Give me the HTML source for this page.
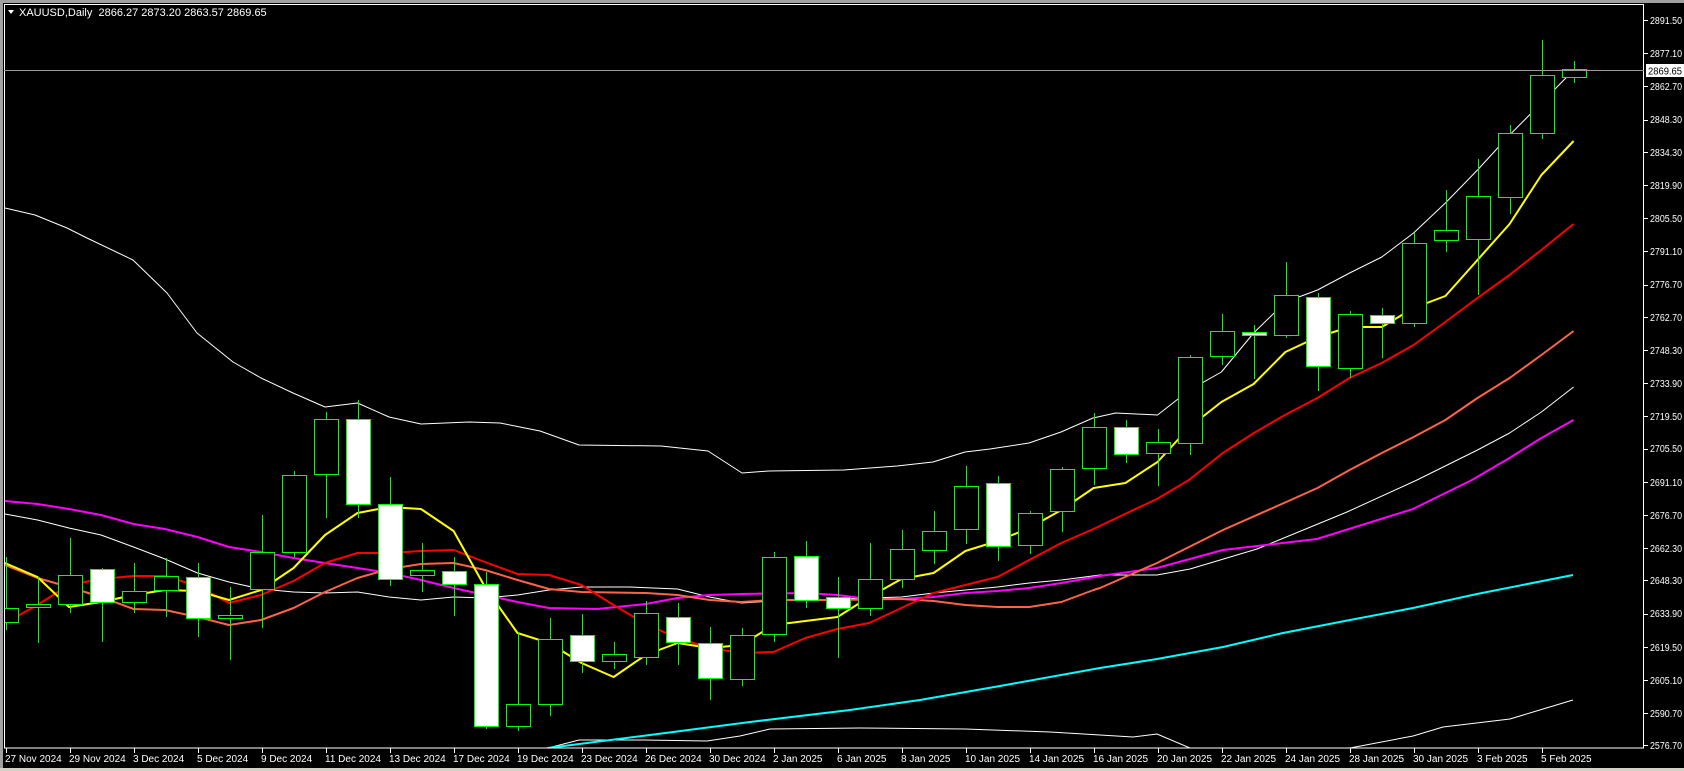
<!DOCTYPE html>
<html><head><meta charset="utf-8"><style>
html,body{margin:0;padding:0;background:#000;width:1684px;height:771px;overflow:hidden}
svg{display:block}
text{font-family:"Liberation Sans",sans-serif;font-size:11px;fill:#fff}
#dates text{font-size:10px}
#axis text{font-size:10px}
</style></head><body>
<svg id="s" width="1684" height="771" xmlns="http://www.w3.org/2000/svg">
<rect x="0" y="0" width="1684" height="771" fill="#000"/>
<rect x="0" y="0" width="1684" height="3" fill="#a0a0a0"/>
<rect x="0" y="0" width="3" height="771" fill="#a0a0a0"/>
<rect x="0" y="768" width="1684" height="3" fill="#d4d0c8"/>
<defs><clipPath id="c"><rect x="4.5" y="4.5" width="1639" height="743"/></clipPath></defs>
<g id="plot" clip-path="url(#c)"></g>
<rect x="4.5" y="4.5" width="1639" height="743.5" fill="none" stroke="#fff" stroke-width="1"/>
<line x1="4" y1="70.5" x2="1644" y2="70.5" stroke="#9a9a9a" stroke-width="1"/>
<path d="M8 10 L14 10 L11 14 Z" fill="#fff"/>
<text x="19" y="16">XAUUSD,Daily&#160;&#160;2866.27 2873.20 2863.57 2869.65</text>
<g id="axis">
<text x="1650" y="24">2891.50</text>
<text x="1650" y="57">2877.10</text>
<text x="1650" y="90">2862.70</text>
<text x="1650" y="123">2848.30</text>
<text x="1650" y="156">2834.30</text>
<text x="1650" y="189">2819.90</text>
<text x="1650" y="222">2805.50</text>
<text x="1650" y="255">2791.10</text>
<text x="1650" y="288">2776.70</text>
<text x="1650" y="321">2762.70</text>
<text x="1650" y="354">2748.30</text>
<text x="1650" y="387">2733.90</text>
<text x="1650" y="420">2719.50</text>
<text x="1650" y="452">2705.50</text>
<text x="1650" y="486">2691.10</text>
<text x="1650" y="519">2676.70</text>
<text x="1650" y="552">2662.30</text>
<text x="1650" y="584">2648.30</text>
<text x="1650" y="617">2633.90</text>
<text x="1650" y="651">2619.50</text>
<text x="1650" y="684">2605.10</text>
<text x="1650" y="717">2590.70</text>
<text x="1650" y="749">2576.70</text>
</g>
<rect x="1646" y="64" width="38" height="13" fill="#fff"/>
<text x="1648" y="74.5" style="fill:#000;font-size:10px" textLength="34" lengthAdjust="spacingAndGlyphs">2869.65</text>
<g id="dates">
<text x="5" y="762">27 Nov 2024</text>
<text x="69" y="762">29 Nov 2024</text>
<text x="133" y="762">3 Dec 2024</text>
<text x="197" y="762">5 Dec 2024</text>
<text x="261" y="762">9 Dec 2024</text>
<text x="325" y="762">11 Dec 2024</text>
<text x="389" y="762">13 Dec 2024</text>
<text x="453" y="762">17 Dec 2024</text>
<text x="517" y="762">19 Dec 2024</text>
<text x="581" y="762">23 Dec 2024</text>
<text x="645" y="762">26 Dec 2024</text>
<text x="709" y="762">30 Dec 2024</text>
<text x="773" y="762">2 Jan 2025</text>
<text x="837" y="762">6 Jan 2025</text>
<text x="901" y="762">8 Jan 2025</text>
<text x="965" y="762">10 Jan 2025</text>
<text x="1029" y="762">14 Jan 2025</text>
<text x="1093" y="762">16 Jan 2025</text>
<text x="1157" y="762">20 Jan 2025</text>
<text x="1221" y="762">22 Jan 2025</text>
<text x="1285" y="762">24 Jan 2025</text>
<text x="1349" y="762">28 Jan 2025</text>
<text x="1413" y="762">30 Jan 2025</text>
<text x="1477" y="762">3 Feb 2025</text>
<text x="1541" y="762">5 Feb 2025</text>
</g>
<g id="ticks"></g>
</svg>
<script>
var NS="http://www.w3.org/2000/svg";
var plot=document.getElementById('plot'),ticks=document.getElementById('ticks');
function el(p,n,a){var e=document.createElementNS(NS,n);for(var k in a)e.setAttribute(k,a[k]);p.appendChild(e);return e;}
function X(i){return 5.6+32*i;}
function line(pts,col,w){el(plot,'polyline',{points:pts.map(function(p){return p[0]+','+p[1]}).join(' '),fill:'none',stroke:col,'stroke-width':w,'stroke-linejoin':'round'});}
Array.prototype.forEach.call(document.querySelectorAll('#axis text'),function(t){t.setAttribute('textLength','32');t.setAttribute('lengthAdjust','spacingAndGlyphs');});
[20,53.2,86.4,119.5,151.8,185,218.1,251.3,284.5,316.7,349.9,383.1,416.3,448.5,481.7,514.9,548.1,580.3,613.5,646.7,679.9,713,745.3].forEach(function(y){el(ticks,'line',{x1:1644,x2:1648,y1:Math.round(y)+.5,y2:Math.round(y)+.5,stroke:'#fff'});});
for(var i=0;i<=48;i+=2){var x=Math.round(X(i))+.5;el(ticks,'line',{x1:x,x2:x,y1:748,y2:753,stroke:'#fff'});}
line([[5,208],[35,215],[67,228],[87,238],[133,260],[167,293],[197,333],[233,362],[261,378],[293,393],[325,407],[357.5,403],[389,417],[421,424],[469,422],[500,423],[525,428],[540,431],[579,445],[661,446],[708,451],[742,473],[768.6,471],[843.6,470],[897,466],[933,462],[965,452],[990,449],[1029,443],[1061,432],[1093,418],[1115.7,413],[1157.5,415],[1189.6,390],[1221.4,372],[1253.6,333],[1285.4,302],[1317.5,290],[1349.6,273],[1381.8,257],[1413.6,233],[1445.4,203],[1477.5,170],[1509.6,135],[1541.4,103],[1573.6,70]],'#fff',1);
line([[5,514],[37.5,520],[69,528],[101,535],[133.6,547],[165,559],[197.5,573],[229,582],[261,589],[293.6,592],[325,593],[357.5,592],[389,597],[421,600],[453.6,597],[485,598],[517.5,595],[549,590],[581.6,587],[629,587],[677.5,589],[709.6,597],[741.4,603],[773.6,601],[837.5,599],[901.4,597],[933.6,593],[965.4,590],[997.5,587],[1029.3,583],[1061.4,580],[1100,575],[1157,575],[1190,569],[1257,549],[1347,512],[1417,480],[1477.5,450],[1509.6,433],[1541.4,412],[1573.6,387]],'#fff',1);
line([[540,752],[548,748],[579,740],[643,740],[707,741],[740,736],[770,729],[860,728],[965,729],[1050,732],[1100,735],[1133,737],[1157,734],[1190,748],[1195,752]],'#fff',1);
line([[1345,752],[1350,748],[1413,736],[1443,727],[1510,719],[1543,709],[1573,700]],'#fff',1);
line([[540,752],[548,748],[650,735],[750,722],[850,710],[920,700],[1000,686],[1100,668],[1157,659],[1223,647],[1283,633],[1350,620],[1413,608],[1477,594],[1573,575]],'#00ffff',2);
line([[5,501],[37.5,504],[69,509],[101,515],[133.6,524],[165,529],[197.5,537],[229,547],[261,552],[293.6,558],[325,563],[357.5,568],[389,573],[421,580],[453.6,588],[485,595],[517.5,602],[549,608],[597,609],[645.7,604],[677.5,598],[709.6,595],[741.4,594],[805.4,593],[837.5,595],[869.3,599],[901.4,599],[933.6,597],[965.4,593],[997.5,591],[1029.3,588],[1061.4,583],[1100,576],[1157,568],[1223,550],[1317,539],[1413,509],[1472,480],[1509.6,458],[1541.4,438],[1573.6,420]],'#ff00ff',2);
line([[5,565],[37.5,578],[69,587],[101,597],[133.6,609],[165,610],[197.5,617],[229,625],[261,620],[293.6,608],[325,592],[357.5,578],[389,569],[421,564],[453.6,563],[485,570],[517.5,580],[549,589],[581.6,592],[645.7,593],[677.5,595],[709.6,600],[741.4,602],[773.6,600],[837.5,600],[901.4,599],[933.6,601],[965.4,605],[997.5,607],[1029.3,607],[1061.4,602],[1093.6,590],[1100,588],[1157,563],[1223,530],[1290.7,500],[1317.5,488],[1349.6,470],[1381.8,453],[1413.6,437],[1445.4,420],[1477.5,398],[1509.6,378],[1541.4,355],[1573.6,331]],'#ff6347',2);
line([[5,623],[37.5,605],[69,585],[101,579],[133.6,576],[165,576],[197.5,586],[229,603],[261,595],[293.6,581],[325,563],[357.5,553],[389,553],[421,551],[453.6,550],[485,562],[517.5,574],[549,575],[581.6,585],[613.6,605],[645.7,624],[677.5,638],[709.6,648],[741.4,653],[773.6,652],[805.4,638],[837.5,629],[869.3,623],[901.4,608],[933.6,593],[965.4,585],[997.5,577],[1029.3,560],[1061.4,543],[1093.6,529],[1125,514],[1157,499],[1189,480],[1222.9,453],[1254,433],[1285,415],[1317.5,398],[1349.6,378],[1381.8,363],[1413.6,345],[1445.4,322],[1477.5,298],[1509.6,275],[1541.4,250],[1573.6,224]],'#ff0000',2);
line([[5,563],[37.5,577],[69,607],[101,602],[133.6,595],[165,590],[197.5,591],[229,600],[261,590],[293.6,568],[325,535],[357.5,513],[389,507],[421,509],[453.6,531],[485,587],[517.5,633],[549,643],[581.6,663],[613.6,677],[645.7,655],[677.5,643],[709.6,648],[741.4,645],[773.6,625],[805.4,621],[837.5,617],[869.3,597],[901.4,579],[933.6,573],[965.4,551],[997.5,541],[1029.3,528],[1061.4,510],[1093.6,488],[1125.4,483],[1157.5,462],[1189.6,427],[1221.4,402],[1253.6,384],[1285.4,352],[1317.5,337],[1349.6,327],[1381.8,327],[1413.6,308],[1445.4,296],[1477.5,260],[1509.6,224],[1541.4,175],[1573.6,141]],'#ffff00',2);
var C=[[608,622,557,630,0],[604,607,577,643,0],[575,604,538,613,0],[569,602,568,642,1],[591,602,563,613,0],[576,590,558,617,0],[577,618,563,637,1],[615,618,587,660,0],[552,589,515,628,0],[475,552,471,557,0],
[419,474,412,518,0],[419,504,400,518,1],[504,579,477,586,1],[570,575,543,592,0],[571,584,557,616,1],[584,726,572,729,1],[704,726,632,731,0],[639,704,618,716,0],[635,661,614,673,1],[654,661,642,669,0],
[613,657,601,665,0],[617,642,603,665,1],[643,678,627,700,1],[635,679,628,686,0],[557,634,552,642,0],[556,600,541,608,1],[597,608,577,658,1],[579,608,543,616,0],[549,579,530,588,0],[531,550,511,564,0],
[486,529,466,544,0],[483,546,476,561,1],[513,545,511,554,0],[469,511,467,532,0],[427,468,413,485,0],[427,454,420,463,1],[442,453,429,486,0],[357,443,355,455,0],[331,356,314,365,0],[332,335,325,379,1],
[295,335,262,338,0],[297,366,293,391,1],[314,368,311,378,0],[315,323,308,358,1],[243,323,233,327,0],[230,240,190,252,0],[196,239,159,295,0],[133,197,125,214,0],[75,133,40,139,0],[69,77,61,83,0]];
C.forEach(function(c,i){var x=Math.round(X(i));
 el(plot,'line',{x1:x+.5,x2:x+.5,y1:c[2],y2:c[3],stroke:'#00ff00','stroke-width':1});
 el(plot,'rect',{x:x-11.5,y:Math.round(c[0])+.5,width:24,height:Math.max(1,Math.round(c[1]-c[0])),fill:c[4]?'#fff':'#000',stroke:'#00ff00','stroke-width':1});
});
</script>
</body></html>
